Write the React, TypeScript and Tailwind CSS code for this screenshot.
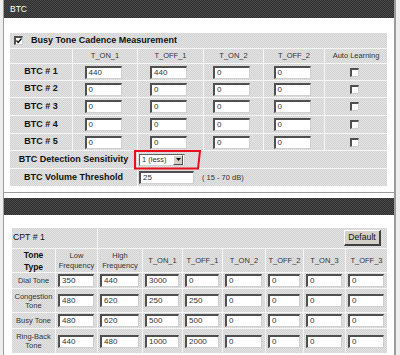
import React from "react";

const CELL =
  "bg-[repeating-conic-gradient(#d3d3d3_0%_25%,#e3e3e3_0%_50%)] bg-[length:2px_2px]";
const DARK =
  "bg-[repeating-conic-gradient(#2f2f2f_0%_25%,#4a4a4a_0%_50%)] bg-[length:2px_2px]";

function Field({ value, className = "" }: { value: string; className?: string }) {
  return (
    <div
      className={
        "h-[13px] bg-white border-t-2 border-l-2 border-b border-r border-t-[#505050] border-l-[#505050] border-b-[#d0d0d0] border-r-[#d0d0d0] pl-[2px] text-[8px] leading-[10px] text-[#333] overflow-hidden whitespace-nowrap " +
        className
      }
    >
      {value}
    </div>
  );
}

function Check({ checked = false }: { checked?: boolean }) {
  return (
    <div className="w-[9px] h-[9px] bg-white border-t-2 border-l-2 border-b border-r border-t-[#505050] border-l-[#505050] border-b-[#d0d0d0] border-r-[#d0d0d0] flex items-center justify-center">
      {checked && (
        <svg width="6" height="6" viewBox="0 0 6 6">
          <path d="M0.5 2.5 L2.2 4.5 L5.5 0.5" fill="none" stroke="#111" strokeWidth="1.3" />
        </svg>
      )}
    </div>
  );
}

function Select() {
  return (
    <div className="relative w-[46px] h-[12px] bg-white border-t border-l border-b border-r border-t-[#606060] border-l-[#606060] border-b-[#d0d0d0] border-r-[#d0d0d0] flex items-center">
      <span className="flex-1 pl-[2px] text-[7.5px] leading-[10px] text-[#333] whitespace-nowrap">1 (less)</span>
      <div className="w-[10px] h-[10px] mr-px bg-[#d4d0c8] border-t border-l border-b border-r border-t-white border-l-white border-b-[#505050] border-r-[#505050] flex items-center justify-center">
        <svg width="5" height="3" viewBox="0 0 5 3">
          <path d="M0 0 H5 L2.5 3 Z" fill="#111" />
        </svg>
      </div>
      <svg
        className="absolute left-[-6px] top-[-5px]"
        width="68"
        height="20"
        viewBox="0 0 68 20"
      >
        <path d="M1 1 H66 L64 18.5 H1 Z" fill="none" stroke="#e8101a" strokeWidth="2" />
      </svg>
    </div>
  );
}

const btcRows = [
  ["440", "440", "0", "0"],
  ["0", "0", "0", "0"],
  ["0", "0", "0", "0"],
  ["0", "0", "0", "0"],
  ["0", "0", "0", "0"],
];

const cptRows: { label: string[]; vals: string[] }[] = [
  { label: ["Dial Tone"], vals: ["350", "440", "3000", "0", "0", "0", "0", "0"] },
  { label: ["Congestion", "Tone"], vals: ["480", "620", "250", "250", "0", "0", "0", "0"] },
  { label: ["Busy Tone"], vals: ["480", "620", "500", "500", "0", "0", "0", "0"] },
  { label: ["Ring-Back", "Tone"], vals: ["440", "480", "1000", "2000", "0", "0", "0", "0"] },
];

export default function App() {
  return (
    <div className="w-[400px] h-[355px] overflow-hidden bg-[#eeeeee] font-['Liberation_Sans',Arial,sans-serif] text-[#111]">
      <div className="ml-[3px] w-[393px] h-full bg-white border-l border-r-2 border-[#9c9c9c]">
        {/* Panel 1 */}
        <div className="border-b border-[#9c9c9c]">
          <div className={DARK + " h-[18px] pl-[6px] flex items-center text-white text-[8.5px]"}>BTC</div>
          <div className="pt-[15px] pb-[6px] pl-[6px]">
            <div className="grid grid-cols-[62px_64px_65px_59px_60px_62px] grid-rows-[15px_14px_16px_16px_17px_17px_16px_17px_17px] gap-px w-[377px] bg-[#f6f6f6]">
              <div className={CELL + " col-span-6 flex items-center pl-[4px]"}>
                <Check checked />
                <span className="ml-[8px] font-bold text-[9px]">Busy Tone Cadence Measurement</span>
              </div>

              <div className={CELL} />
              {["T_ON_1", "T_OFF_1", "T_ON_2", "T_OFF_2", "Auto Learning"].map((h) => (
                <div key={h} className={CELL + " flex items-center justify-center text-[7.5px] text-[#333]"}>
                  {h}
                </div>
              ))}

              {btcRows.map((vals, i) => (
                <React.Fragment key={i}>
                  <div className={CELL + " flex items-center justify-center font-bold text-[9px]"}>
                    BTC # {i + 1}
                  </div>
                  {vals.map((v, j) => (
                    <div key={j} className={CELL + " flex items-center justify-center pr-[4px]"}>
                      <Field value={v} className="w-[37px]" />
                    </div>
                  ))}
                  <div className={CELL + " flex items-center justify-center pr-[3px]"}>
                    <Check />
                  </div>
                </React.Fragment>
              ))}

              <div className={CELL + " col-span-2 flex items-center justify-center font-bold text-[9px]"}>
                BTC Detection Sensitivity
              </div>
              <div className={CELL + " col-span-4 flex items-center pl-px"}>
                <Select />
              </div>

              <div className={CELL + " col-span-2 flex items-center justify-center font-bold text-[9px]"}>
                BTC Volume Threshold
              </div>
              <div className={CELL + " col-span-4 flex items-center pl-px"}>
                <Field value="25" className="w-[55px]" />
                <span className="ml-[8px] text-[7.5px] text-[#333]">( 15 - 70 dB)</span>
              </div>
            </div>
          </div>
        </div>

        {/* Panel 2 */}
        <div className="mt-[5px]">
          <div className={DARK + " h-[17px]"} />
          <div className="pt-[13px] pl-[8px]">
            <div className="grid grid-cols-[43px_41px_44px_39px_39px_42px_37px_41px_41px] grid-rows-[20px_23px_15px_23px_15px_24px] gap-px w-[375px] bg-[#f6f6f6]">
              <div className={CELL + " col-span-2 flex items-center pl-px text-[8.7px]"}>CPT # 1</div>
              <div className={CELL + " col-span-7 flex items-center justify-end pr-[6px]"}>
                <div className="w-[37px] h-[16px] bg-[#d4d0c8] border-t border-l border-b-2 border-r-2 border-t-white border-l-white border-b-[#404040] border-r-[#404040] flex items-center justify-center text-[8.7px]">
                  Default
                </div>
              </div>

              <div className={CELL + " flex flex-col items-center justify-center font-bold text-[8.5px] leading-[12px]"}>
                <span>Tone</span>
                <span>Type</span>
              </div>
              <div className={CELL + " flex flex-col items-center justify-center text-[7.5px] leading-[10px] text-[#333]"}>
                <span>Low</span>
                <span>Frequency</span>
              </div>
              <div className={CELL + " flex flex-col items-center justify-center text-[7.5px] leading-[10px] text-[#333]"}>
                <span>High</span>
                <span>Frequency</span>
              </div>
              {["T_ON_1", "T_OFF_1", "T_ON_2", "T_OFF_2", "T_ON_3", "T_OFF_3"].map((h) => (
                <div key={h} className={CELL + " flex items-center justify-center text-[7.5px] text-[#333]"}>
                  {h}
                </div>
              ))}

              {cptRows.map((r, i) => (
                <React.Fragment key={i}>
                  <div className={CELL + " flex flex-col items-center justify-center text-[7.5px] leading-[9px] text-[#333]"}>
                    {r.label.map((l) => (
                      <span key={l}>{l}</span>
                    ))}
                  </div>
                  {r.vals.map((v, j) => (
                    <div key={j} className={CELL + " flex items-center pl-[2px] pr-[3px]"}>
                      <Field value={v} className="w-full" />
                    </div>
                  ))}
                </React.Fragment>
              ))}
            </div>
          </div>
        </div>
      </div>
    </div>
  );
}
